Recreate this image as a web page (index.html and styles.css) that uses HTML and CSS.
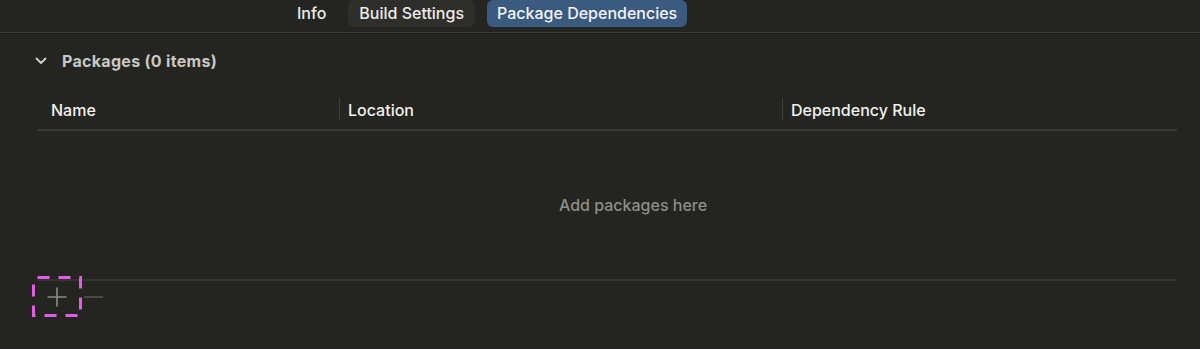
FILE: index.html
```html
<!DOCTYPE html>
<html lang="en">
  <head>
    <meta charset="UTF-8" />
    <meta name="viewport" content="width=device-width, initial-scale=1.0" />
    <title>Package Dependencies</title>
    <link rel="stylesheet" href="styles.css">
  </head>
  <body>
    <div class="tabbar">
      <div class="tab">Info</div>
      <div class="tab tab-plain">Build Settings</div>
      <div class="tab tab-active">Package Dependencies</div>
    </div>

    <div class="section">
      <div class="section-title">
        <svg class="chevron" width="12" height="8" viewBox="0 0 12 8">
          <path d="M1.5 1.5 L6 6 L10.5 1.5" fill="none" stroke="#d0d0cc" stroke-width="1.8" stroke-linecap="round" stroke-linejoin="round" />
        </svg>
        <span>Packages (0 items)</span>
      </div>

      <div class="table">
        <div class="table-head">
          <div class="col col-name">Name</div>
          <div class="col col-location">Location</div>
          <div class="col col-rule">Dependency Rule</div>
        </div>
        <div class="table-empty">Add packages here</div>
      </div>

      <div class="toolbar">
        <div class="add-btn">
          <svg class="focus-ring" width="50" height="41" viewBox="0 0 50 41">
            <rect x="1.5" y="1.5" width="47" height="38" fill="none" stroke="#e25ce6" stroke-width="3" stroke-dasharray="12 9" stroke-dashoffset="-4" />
          </svg>
          <svg width="20" height="20" viewBox="0 0 20 20">
            <path d="M10 0.5 V19.5 M0.5 10 H19.5" stroke="#8d8d88" stroke-width="1.6" />
          </svg>
        </div>
        <svg class="remove-btn" width="19" height="4" viewBox="0 0 19 4">
          <path d="M0 2 H19" stroke="#56564f" stroke-width="1.6" />
        </svg>
      </div>
    </div>
  </body>
</html>
```

FILE: styles.css
```css
body {
  margin: 0;
  background-color: #242420;
  font-family: Inter, "Noto Sans", sans-serif;
  color: #ececea;
  height: 349px;
  overflow: hidden;
}
.tabbar {
  display: flex;
  align-items: flex-start;
  gap: 11px;
  height: 32px;
  padding-left: 286px;
  border-bottom: 1px solid #3a3a36;
  box-shadow: 0 1px 0 #1b1b18;
}
.tab {
  height: 27px;
  line-height: 27px;
  padding: 0 11px;
  font-size: 16px;
  font-weight: 500;
  border-radius: 6px;
  color: #ececea;
}
.tab-plain {
  background-color: #2e2e2a;
}
.tab-active {
  background-color: #3b5a80;
  color: #f4f4f4;
  margin-left: 1px;
  padding: 0 10px;
}
.section {
  padding: 0 23px 0 37px;
}
.section-title {
  display: flex;
  align-items: center;
  height: 55px;
  margin-left: -2px;
  font-size: 16px;
  font-weight: 700;
  letter-spacing: 0.3px;
  color: #c8c8c4;
}
.chevron {
  margin-right: 15px;
}
.table-head {
  display: flex;
  height: 32px;
  margin-top: 9px;
  border-bottom: 2px solid #393935;
  font-size: 16px;
  font-weight: 500;
  color: #f2f2f0;
}
.col {
  display: flex;
  align-items: center;
  height: 23px;
  margin-top: 1px;
}
.col-name {
  width: 288px;
  padding-left: 14px;
}
.col-location,
.col-rule {
  border-left: 1px solid #3e3e3a;
  padding-left: 8px;
}
.col-location {
  width: 434px;
}
.col-rule {
  flex: 1;
}
.table-empty {
  height: 150px;
  padding-left: 52px;
  padding-bottom: 1px;
  box-sizing: border-box;
  border-bottom: 2px solid #333330;
  display: flex;
  align-items: center;
  justify-content: center;
  font-size: 16px;
  font-weight: 500;
  color: #8e8e8a;
}
.toolbar {
  display: flex;
  align-items: center;
  margin-top: -5px;
  margin-left: -5px;
}
.add-btn {
  position: relative;
  width: 50px;
  height: 41px;
  display: flex;
  align-items: center;
  justify-content: center;
}
.focus-ring {
  position: absolute;
  left: 0;
  top: 0;
}
.remove-btn {
  margin-left: 2px;
}
```
